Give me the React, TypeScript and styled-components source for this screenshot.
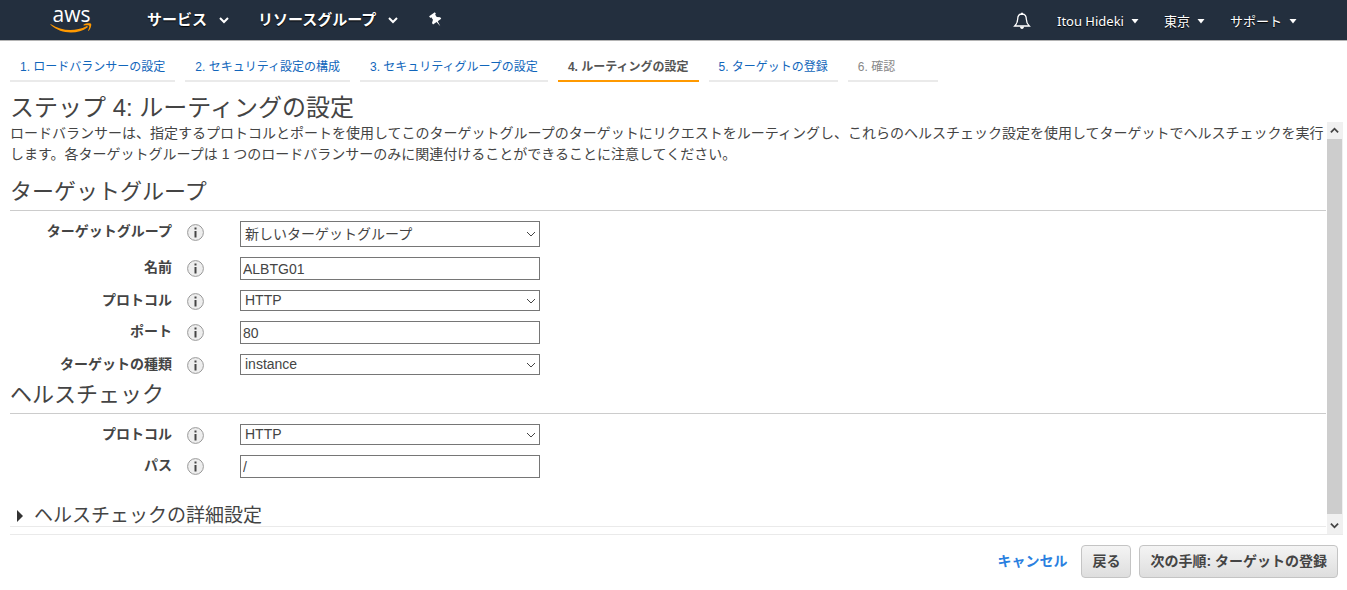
import React from 'react';
import styled, { createGlobalStyle } from 'styled-components';

const GlobalStyle = createGlobalStyle`
  *, *::before, *::after { box-sizing: border-box; }
  body {
    margin: 0;
    background: #fff;
    color: #444;
    font-family: 'Liberation Sans', 'Noto Sans CJK JP', sans-serif;
    font-size: 14px;
    line-height: 21px;
  }
  button, input, select { font: inherit; color: inherit; margin: 0; }
`;

const Header = styled.header`
  display: flex;
  align-items: center;
  height: 41px;
  padding: 0 50px;
  background: #232f3e;
  border-bottom: 1px solid #b4b4b4;
  color: #fff;
  font-family: 'Noto Sans', 'Noto Sans CJK JP', sans-serif;
`;

const Logo = styled.a`
  display: flex;
  flex-direction: column;
  align-items: center;
  width: 43px;
  margin-right: 54px;
  padding-bottom: 2px;
  color: #fff;
  font-family: 'Open Sans', sans-serif;
  font-size: 21px;
  font-weight: 500;
  line-height: 18px;
  text-decoration: none;
`;

const MenuButton = styled.button<{ $primary?: boolean }>`
  display: flex;
  align-items: center;
  gap: ${(p) => (p.$primary ? 12 : 7)}px;
  margin-right: ${(p) => (p.$primary ? 29 : 25)}px;
  padding: 0 0 ${(p) => (p.$primary ? 2 : 0)}px;
  border: 0;
  background: none;
  font-size: ${(p) => (p.$primary ? 15 : 13)}px;
  font-weight: ${(p) => (p.$primary ? 700 : 400)};
  line-height: 20px;
  text-shadow: 0 1px 1px #000;
  white-space: nowrap;
  > svg { margin-top: 2px; }
`;

const IconButton = styled.button`
  display: flex;
  padding: 0;
  border: 0;
  background: none;
`;

const AccountMenus = styled.div`
  display: flex;
  align-items: center;
  margin-left: auto;
  padding-top: 1px;
  ${IconButton} { margin-right: 26px; }
  ${MenuButton}:last-child { margin-right: 0; }
`;

const Tabs = styled.nav`
  display: flex;
  gap: 10px;
  padding: 16px 10px 0;
`;

const Tab = styled.a<{ $state?: 'active' | 'disabled' }>`
  min-width: 90px;
  padding: 0 10px 2px;
  border-bottom: 2px solid ${(p) => (p.$state === 'active' ? '#f90' : '#eaeaea')};
  color: ${(p) => (p.$state === 'active' ? '#555' : p.$state === 'disabled' ? '#888' : '#1166bb')};
  font-size: 12px;
  font-weight: ${(p) => (p.$state === 'active' ? 700 : 400)};
  text-decoration: none;
  white-space: nowrap;
`;

const PageTitle = styled.h1`
  margin: 12px 10px 0;
  font-size: 24px;
  font-weight: 400;
  line-height: 28px;
`;

const ScrollPane = styled.div`
  display: flex;
  padding: 0 4px 0 10px;
`;

const Content = styled.main`
  flex: 1;
  min-width: 0;
  padding: 1px 0 7px;
`;

const Intro = styled.p`
  margin: 0 0 7px;
`;

const SectionTitle = styled.h2`
  margin: 0 0 10px;
  padding-top: 2px;
  border-bottom: 1px solid #ccc;
  font-size: 22px;
  font-weight: 400;
  line-height: 36px;
`;

const Fields = styled.div`
  display: flex;
  flex-direction: column;
  gap: 10px;
`;

const Row = styled.div`
  display: flex;
  align-items: flex-start;
`;

const Label = styled.label`
  width: 162px;
  font-weight: 700;
  text-align: right;
`;

const InfoButton = styled(IconButton)`
  margin: 3px 36px 0 15px;
`;

const TextInput = styled.input`
  width: 300px;
  height: 23px;
  padding: 0 2px;
  border: 1px solid #767676;
  background: #fff;
`;

const SelectBox = styled.div`
  display: grid;
  align-items: center;
  width: 300px;
  > * { grid-area: 1 / 1; }
  > svg { justify-self: end; margin-right: 4px; pointer-events: none; }
`;

const Select = styled.select<{ $tall?: boolean }>`
  appearance: none;
  width: 100%;
  height: ${(p) => (p.$tall ? 26 : 21)}px;
  padding: 0 4px;
  border: 1px solid #767676;
  border-radius: 0;
  background: #fff;
  line-height: 19px;
`;

const Advanced = styled.button`
  display: flex;
  align-items: center;
  gap: 10px;
  width: 100%;
  margin-top: 26px;
  padding: 2px 6px 0;
  border: 0;
  border-bottom: 1px solid #eaeaea;
  background: none;
  font-size: 19px;
  line-height: 20px;
`;

const ScrollTrack = styled.div`
  display: flex;
  flex-direction: column;
  width: 17px;
  padding-left: 1px;
  background: #f0f0f0;
  background-clip: content-box;
`;

const ScrollArrow = styled.button`
  display: flex;
  align-items: center;
  justify-content: center;
  height: 17px;
  padding: 0 2px 0 0;
  border: 0;
  background: #f0f0f0;
`;

const ScrollThumb = styled.div`
  flex: 1;
  margin-right: 1px;
  margin-bottom: 3px;
  background: #cdcdcd;
`;

const Footer = styled.footer`
  display: flex;
  align-items: center;
  justify-content: flex-end;
  margin: 0 4px 0 10px;
  padding: 10px 5px 12px 0;
  border-top: 1px solid #eaeaea;
  font-weight: 700;
`;

const CancelLink = styled.a`
  margin-right: 14px;
  color: #2a80e0;
  text-decoration: none;
`;

const ActionButton = styled.button`
  height: 33px;
  padding: 0 10px;
  border: 1px solid #c4c4c4;
  border-radius: 4px;
  background: linear-gradient(#f4f4f4, #dedede);
  white-space: nowrap;
  & + & { margin-left: 8px; }
`;

const Chevron = ({ size = 10, stroke = 1, up = false }: { size?: number; stroke?: number; up?: boolean }) => (
  <svg width={size} height={size} viewBox="0 0 10 10" fill="none" stroke="currentColor" strokeWidth={stroke} aria-hidden="true">
    <path d={up ? 'M1 7l4-4 4 4' : 'M1 3l4 4 4-4'} />
  </svg>
);

const Caret = () => (
  <svg width="8" height="5" viewBox="0 0 8 5" fill="currentColor" aria-hidden="true">
    <path d="M.5 0h7L4 4.500z" />
  </svg>
);

const Info = () => (
  <InfoButton type="button" aria-label="情報">
    <svg width="17" height="17" viewBox="0 0 17 17" aria-hidden="true">
      <circle cx="8.5" cy="8.5" r="7.9" fill="#eee" stroke="#999" />
      <path d="M7.500 3.500h2v2h-2zM7.500 7h2v6.500h-2z" fill="#444" />
    </svg>
  </InfoButton>
);

type FieldProps = { id: string; label: string; value: string; kind: 'text' | 'select'; tall?: boolean };

const Field = ({ id, label, value, kind, tall }: FieldProps) => (
  <Row>
    <Label htmlFor={id}>{label}</Label>
    <Info />
    {kind === 'text' ? (
      <TextInput id={id} type="text" defaultValue={value} />
    ) : (
      <SelectBox>
        <Select id={id} $tall={tall} defaultValue={value}>
          <option>{value}</option>
        </Select>
        <Chevron stroke={1} />
      </SelectBox>
    )}
  </Row>
);

const targetFields: FieldProps[] = [
  { id: 'group', label: 'ターゲットグループ', value: '新しいターゲットグループ', kind: 'select', tall: true },
  { id: 'name', label: '名前', value: 'ALBTG01', kind: 'text' },
  { id: 'protocol', label: 'プロトコル', value: 'HTTP', kind: 'select' },
  { id: 'port', label: 'ポート', value: '80', kind: 'text' },
  { id: 'type', label: 'ターゲットの種類', value: 'instance', kind: 'select' },
];

const healthFields: FieldProps[] = [
  { id: 'hc-protocol', label: 'プロトコル', value: 'HTTP', kind: 'select' },
  { id: 'hc-path', label: 'パス', value: '/', kind: 'text' },
];

export default function App() {
  return (
    <>
      <GlobalStyle />
      <Header>
        <Logo href="#">
          aws
          <svg width="43" height="10" viewBox="0 0 43 10" fill="#f90" aria-hidden="true">
            <path d="M1 1.2C11 8 25 9 36.500 3.200c1-.5 1.800.6.9 1.300C28 11.500 11 11.500.8 2c-.5-.5-.3-1.100.2-.8z" />
            <path d="M33.500 1.800c2-1.500 6.500-1.800 7.500-1 .8.900-.2 5-2.300 7-.4.300-.8.100-.6-.3.600-1.300 1.600-4 1.100-4.800-.6-.7-3.800-.4-5.300-.3-.5 0-.7-.3-.4-.6z" />
          </svg>
        </Logo>
        <MenuButton $primary type="button">サービス <Chevron stroke={2} /></MenuButton>
        <MenuButton $primary type="button">リソースグループ <Chevron stroke={2} /></MenuButton>
        <IconButton type="button" aria-label="ピン留め">
          <svg width="18" height="16" viewBox="0 0 18 16" fill="#fff" aria-hidden="true">
            <g transform="translate(2 1) rotate(-35 7 7)">
              <path d="M3.500 0h7v2H9.300V5l2.700 2.200V9H7.700L7 14.500 6.300 9H2V7.200L4.700 5V2H3.500z" />
            </g>
          </svg>
        </IconButton>
        <AccountMenus>
          <IconButton type="button" aria-label="通知">
            <svg width="18" height="18" viewBox="0 0 18 18" fill="none" stroke="#fff" strokeWidth="1.300" aria-hidden="true">
              <path d="M9 2C5.500 2 4.700 4.500 4.700 7c0 3.500-1 5-3 7h14.600c-2-2-3-3.500-3-7 0-2.500-.8-5-4.300-5z" />
              <path d="M7 14.500h4c0 1.600-.8 2.500-2 2.500s-2-.9-2-2.500zM8 .8h2V2H8z" fill="#fff" stroke="none" />
            </svg>
          </IconButton>
          <MenuButton type="button">Itou Hideki <Caret /></MenuButton>
          <MenuButton type="button">東京 <Caret /></MenuButton>
          <MenuButton type="button">サポート <Caret /></MenuButton>
        </AccountMenus>
      </Header>
      <Tabs>
        <Tab href="#">1. ロードバランサーの設定</Tab>
        <Tab href="#">2. セキュリティ設定の構成</Tab>
        <Tab href="#">3. セキュリティグループの設定</Tab>
        <Tab href="#" $state="active" aria-current="step">4. ルーティングの設定</Tab>
        <Tab href="#">5. ターゲットの登録</Tab>
        <Tab $state="disabled">6. 確認</Tab>
      </Tabs>
      <PageTitle>ステップ 4: ルーティングの設定</PageTitle>
      <ScrollPane>
        <Content>
          <Intro>
            ロードバランサーは、指定するプロトコルとポートを使用してこのターゲットグループのターゲットにリクエストをルーティングし、これらのヘルスチェック設定を使用してターゲットでヘルスチェックを実行します。各ターゲットグループは 1 つのロードバランサーのみに関連付けることができることに注意してください。
          </Intro>
          <SectionTitle>ターゲットグループ</SectionTitle>
          <Fields>{targetFields.map((f) => <Field key={f.id} {...f} />)}</Fields>
          <SectionTitle>ヘルスチェック</SectionTitle>
          <Fields>{healthFields.map((f) => <Field key={f.id} {...f} />)}</Fields>
          <Advanced type="button" aria-expanded="false">
            <svg width="8" height="12" viewBox="0 0 8 12" fill="#333" aria-hidden="true"><path d="M1 0l6 6-6 6z" /></svg>
            ヘルスチェックの詳細設定
          </Advanced>
        </Content>
        <ScrollTrack>
          <ScrollArrow type="button" aria-label="上へ"><Chevron size={9} stroke={2} up /></ScrollArrow>
          <ScrollThumb />
          <ScrollArrow type="button" aria-label="下へ"><Chevron size={9} stroke={2} /></ScrollArrow>
        </ScrollTrack>
      </ScrollPane>
      <Footer>
        <CancelLink href="#">キャンセル</CancelLink>
        <ActionButton type="button">戻る</ActionButton>
        <ActionButton type="button">次の手順: ターゲットの登録</ActionButton>
      </Footer>
    </>
  );
}
